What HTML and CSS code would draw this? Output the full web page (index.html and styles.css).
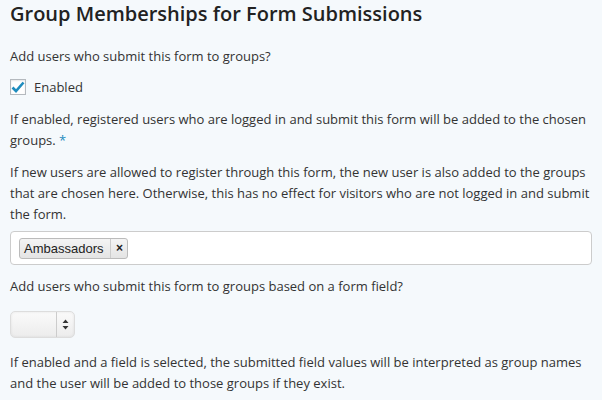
FILE: index.html
```html
<!DOCTYPE html>
<html lang="en">

<head>
    <meta charset="UTF-8">
    <title>Group Memberships</title>
    <link rel="stylesheet" href="styles.css">
</head>

<body>
    <h2>Group Memberships for Form Submissions</h2>
    <p class="question">Add users who submit this form to groups?</p>
    <label class="check">
        <span class="box">
            <svg width="14" height="12" viewBox="0 0 14 12"><path d="M1.5 6.5 L5 10 L12.5 1.5" fill="none" stroke="#1e8cbe" stroke-width="2.6"/></svg>
        </span>
        Enabled
    </label>
    <p class="desc first">If enabled, registered users who are logged in and submit this form will be added to the chosen groups. <span class="star">*</span></p>
    <p class="desc">If new users are allowed to register through this form, the new user is also added to the groups that are chosen here. Otherwise, this has no effect for visitors who are not logged in and submit the form.</p>
    <div class="chosen">
        <div class="tag">
            <span class="tag-name">Ambassadors</span>
            <span class="tag-x">&times;</span>
        </div>
    </div>
    <p class="question second">Add users who submit this form to groups based on a form field?</p>
    <div class="select">
        <div class="select-val"></div>
        <div class="select-arrows">
            <svg width="7" height="11" viewBox="0 0 7 11"><path d="M3.5 0.5 L6.5 4 L0.5 4 Z M0.5 7 L6.5 7 L3.5 10.5 Z" fill="#333"/></svg>
        </div>
    </div>
    <p class="desc last">If enabled and a field is selected, the submitted field values will be interpreted as group names and the user will be added to those groups if they exist.</p>
</body>

</html>
```

FILE: styles.css
```css
body {
    margin: 0;
    padding: 0 10px;
    background-color: #f5f9fc;
    font-family: "Open Sans", sans-serif;
    font-size: 13px;
    line-height: 21px;
    color: #333;
}

h2 {
    margin: 0;
    font-size: 20px;
    line-height: 28px;
    font-weight: 600;
    color: #222;
}

p {
    margin: 0;
}

.question {
    margin-top: 18px;
}

.question.second {
    margin-top: 11px;
}

.desc {
    margin-top: 11px;
}

.desc.first {
    margin-top: 12px;
}

.desc.last {
    margin-top: 14px;
}

.check {
    display: flex;
    align-items: center;
    gap: 8px;
    height: 20px;
    margin-top: 10px;
}

.box {
    display: flex;
    align-items: center;
    justify-content: center;
    width: 14px;
    height: 14px;
    border: 1px solid #b4b9be;
    background-color: #fff;
    box-shadow: inset 0 1px 2px rgba(0, 0, 0, 0.1);
}

.star {
    color: #1e8cbe;
}

.chosen {
    height: 32px;
    margin-top: 6px;
    padding: 0 8px;
    display: flex;
    align-items: center;
    background-color: #fff;
    border: 1px solid #ccc;
    border-radius: 4px;
}

.tag {
    display: flex;
    height: 19px;
    border: 1px solid #bbb;
    border-radius: 3px;
    background: linear-gradient(#f4f4f4, #e4e4e4);
    font-family: "Liberation Sans", Arial, sans-serif;
    font-size: 13px;
    line-height: 19px;
    color: #222;
}

.tag-name {
    padding: 0 7px 0 4px;
    border-right: 1px solid #ccc;
}

.tag-x {
    width: 16px;
    text-align: center;
    font-weight: bold;
    font-size: 12px;
}

.select {
    display: flex;
    width: 63px;
    height: 25px;
    margin-top: 14px;
    border: 1px solid #ddd;
    border-radius: 5px;
    background: linear-gradient(#fafafa, #ececec);
    box-shadow: inset 0 0 3px rgba(0, 0, 0, 0.08);
}

.select-val {
    flex: 1;
    border-right: 1px solid #ccc;
}

.select-arrows {
    width: 17px;
    display: flex;
    align-items: center;
    justify-content: center;
}
```
